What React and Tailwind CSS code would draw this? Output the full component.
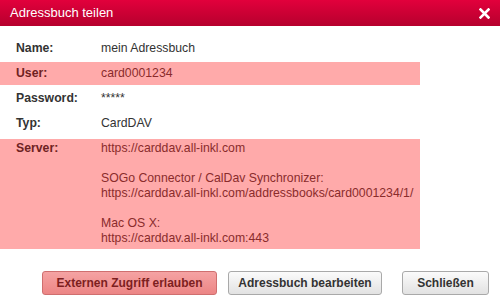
export default function App() {
  const font = { fontFamily: '"Liberation Sans", Arial, sans-serif' };
  return (
    <div className="w-[500px] h-[306px] bg-white overflow-hidden text-[12.25px]" style={font}>
      <div className="h-[26px] bg-gradient-to-b from-[#e2003c] to-[#b6002d] flex items-center justify-between pl-[10px] pr-[10px]">
        <span className="text-white text-[13px]">Adressbuch teilen</span>
        <svg width="11" height="11" viewBox="0 0 11 11" className="mt-[1px]">
          <path d="M1.5 1.5 L9.5 9.5 M9.5 1.5 L1.5 9.5" stroke="white" strokeWidth="2.6" strokeLinecap="square" />
        </svg>
      </div>
      <div className="pt-[11px] flex flex-col gap-[2px] w-[420px]">
        <div className="h-[23px] flex items-center text-[#333]">
          <span className="w-[101px] pl-[16px] font-bold">Name:</span>
          <span>mein Adressbuch</span>
        </div>
        <div className="h-[23px] flex items-center bg-[#ffaaaa]">
          <span className="w-[101px] pl-[16px] font-bold text-[#6e2222]">User:</span>
          <span className="text-[#8a2c2c]">card0001234</span>
        </div>
        <div className="h-[23px] flex items-center text-[#333]">
          <span className="w-[101px] pl-[16px] font-bold">Password:</span>
          <span>*****</span>
        </div>
        <div className="h-[23px] flex items-center text-[#333]">
          <span className="w-[101px] pl-[16px] font-bold">Typ:</span>
          <span>CardDAV</span>
        </div>
        <div className="mt-[2px] flex bg-[#ffaaaa] pt-[2px] pb-[3px] leading-[15px]">
          <span className="w-[101px] pl-[16px] font-bold text-[#6e2222]">Server:</span>
          <div className="text-[#8a2c2c] whitespace-nowrap">
            <div>https://carddav.all-inkl.com</div>
            <div>&nbsp;</div>
            <div>SOGo Connector / CalDav Synchronizer:</div>
            <div>https://carddav.all-inkl.com/addressbooks/card0001234/1/</div>
            <div>&nbsp;</div>
            <div>Mac OS X:</div>
            <div>https://carddav.all-inkl.com:443</div>
          </div>
        </div>
      </div>
      <div className="mt-[22px] flex pl-[42px]">
        <button className="w-[175px] h-[24px] rounded-[3px] border border-[#cf6f6f] bg-gradient-to-b from-[#f5a3a3] to-[#ec8585] text-[#7d1f1f] font-bold text-[12px]">
          Externen Zugriff erlauben
        </button>
        <button className="ml-[11px] w-[154px] h-[24px] rounded-[3px] border border-[#a9a9a9] bg-gradient-to-b from-[#fbfbfb] to-[#e2e2e2] text-[#333] font-bold text-[12px]">
          Adressbuch bearbeiten
        </button>
        <button className="ml-[20px] w-[87px] h-[24px] rounded-[3px] border border-[#a9a9a9] bg-gradient-to-b from-[#fbfbfb] to-[#e2e2e2] text-[#333] font-bold text-[12px]">
          Schließen
        </button>
      </div>
    </div>
  );
}
